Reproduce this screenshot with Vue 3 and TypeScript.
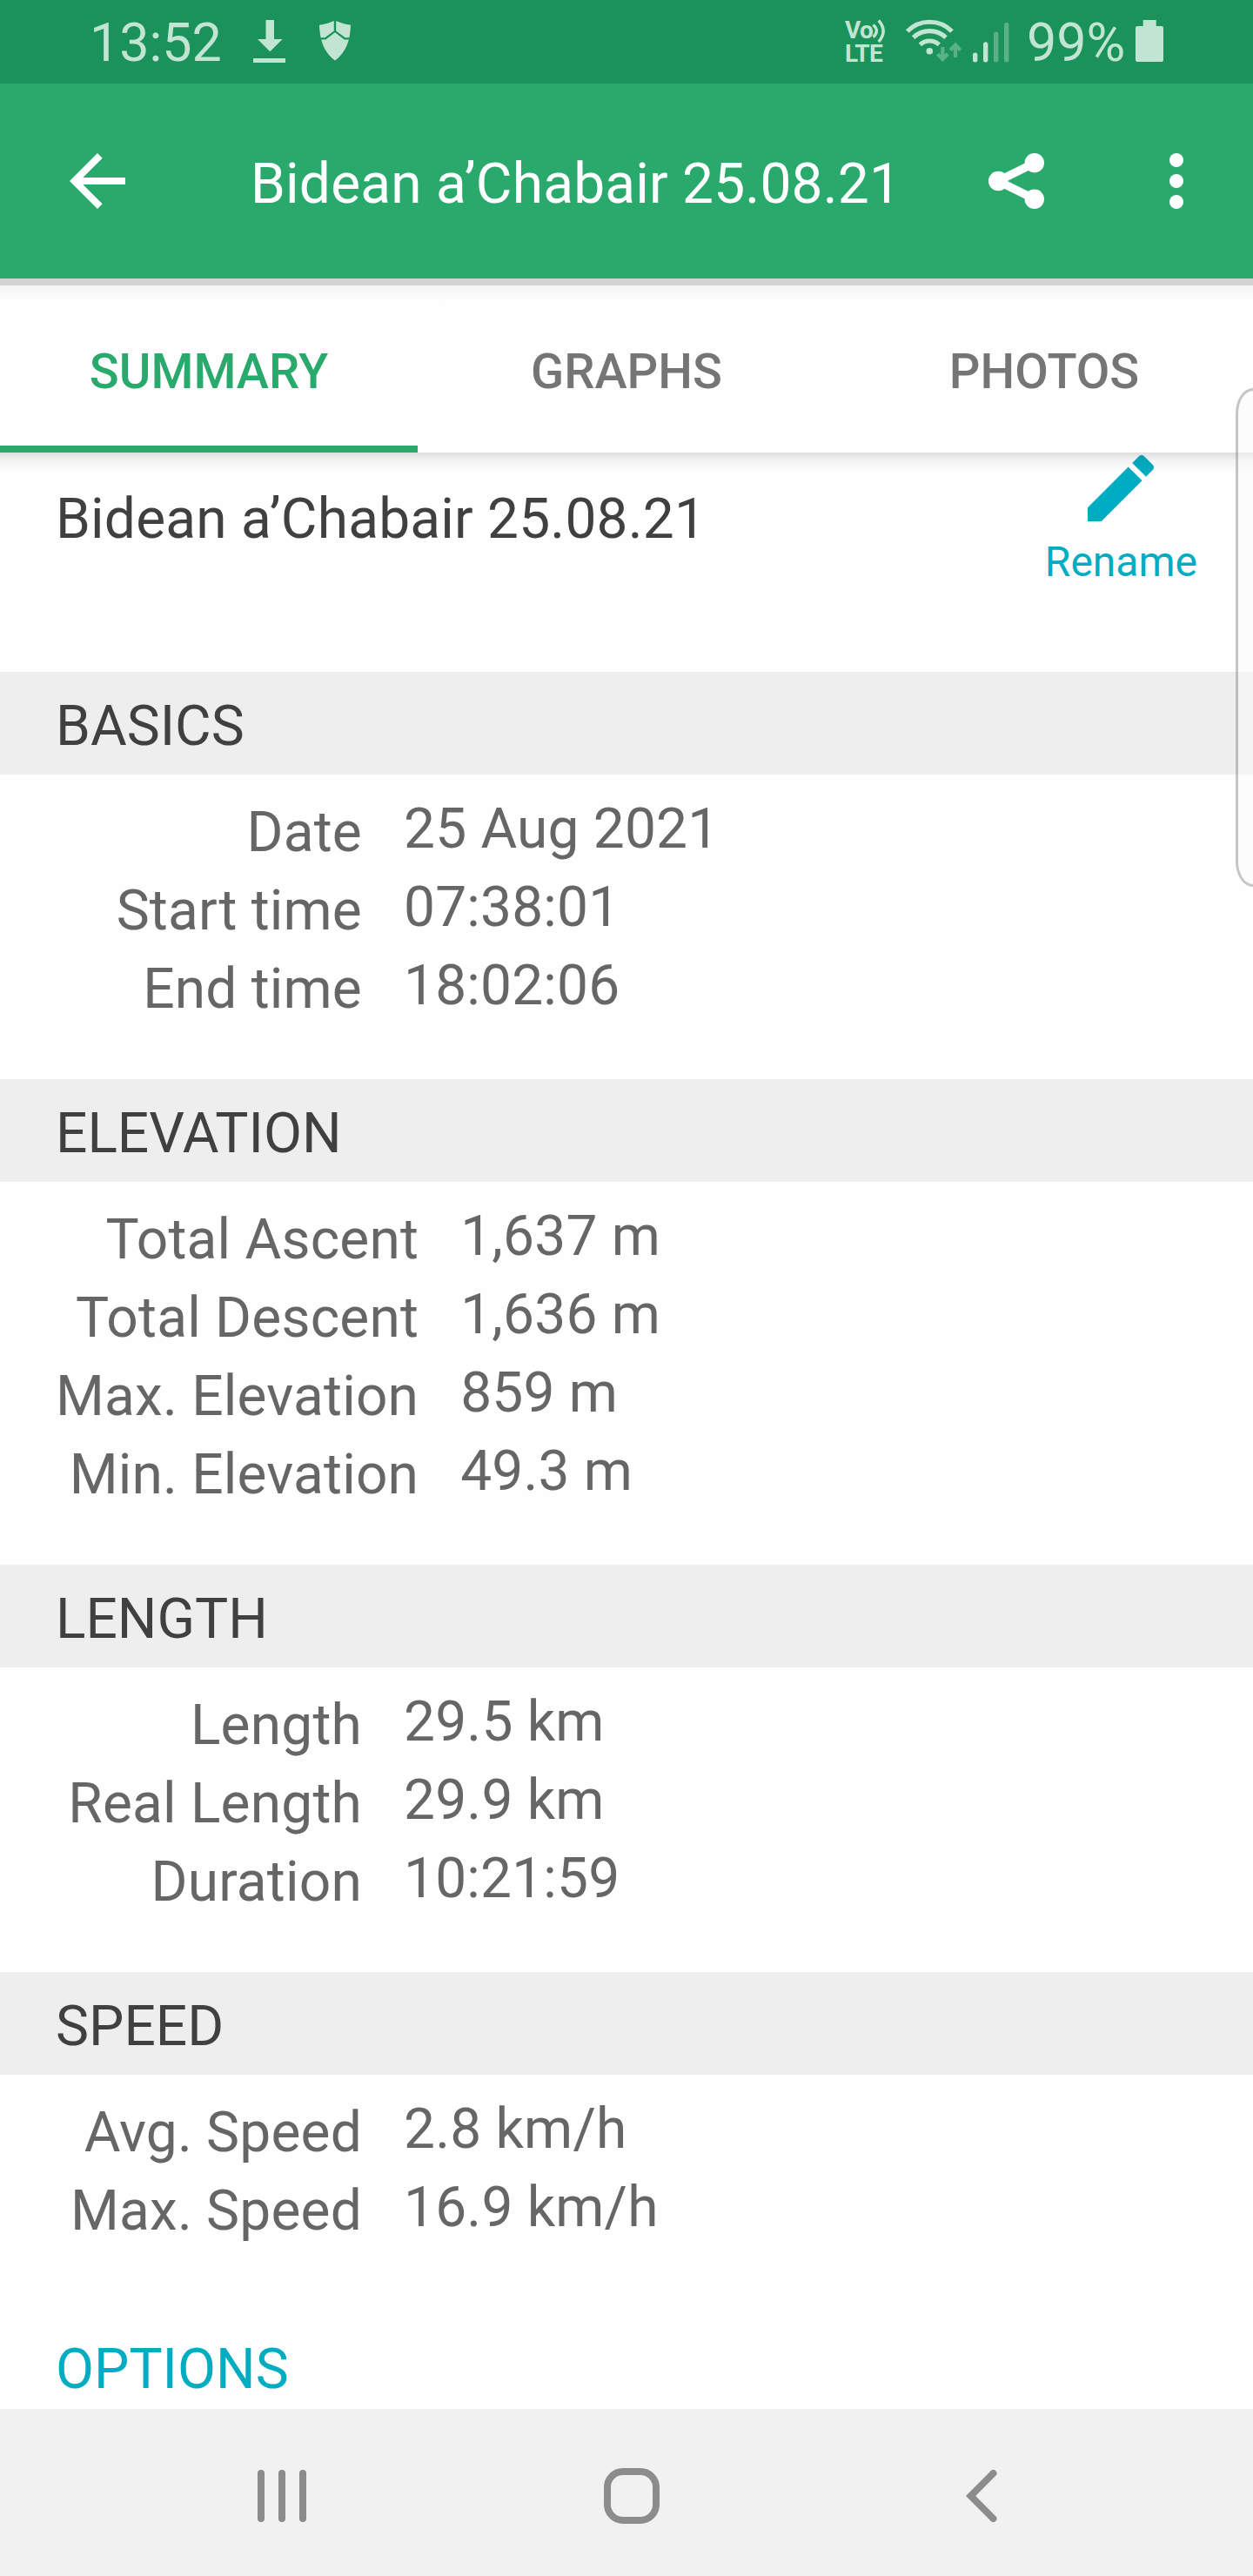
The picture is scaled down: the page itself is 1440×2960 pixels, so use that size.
<script setup lang="ts">
interface Row {
  label: string
  value: string
}
interface Section {
  title: string
  rows: Row[]
}

const trackName = 'Bidean a’Chabair 25.08.21'
const tabs: string[] = ['SUMMARY', 'GRAPHS', 'PHOTOS']
const activeTab = 'SUMMARY'

const sections: Section[] = [
  {
    title: 'BASICS',
    rows: [
      { label: 'Date', value: '25 Aug 2021' },
      { label: 'Start time', value: '07:38:01' },
      { label: 'End time', value: '18:02:06' },
    ],
  },
  {
    title: 'ELEVATION',
    rows: [
      { label: 'Total Ascent', value: '1,637 m' },
      { label: 'Total Descent', value: '1,636 m' },
      { label: 'Max. Elevation', value: '859 m' },
      { label: 'Min. Elevation', value: '49.3 m' },
    ],
  },
  {
    title: 'LENGTH',
    rows: [
      { label: 'Length', value: '29.5 km' },
      { label: 'Real Length', value: '29.9 km' },
      { label: 'Duration', value: '10:21:59' },
    ],
  },
  {
    title: 'SPEED',
    rows: [
      { label: 'Avg. Speed', value: '2.8 km/h' },
      { label: 'Max. Speed', value: '16.9 km/h' },
    ],
  },
]
</script>

<template>
  <div class="screen">
    <div class="status">
      <span class="clock">13:52</span>
      <svg class="download" width="38" height="50" viewBox="0 0 38 50" fill="currentColor">
        <path d="M14.5 0h9.5v22h9.7L19.3 36.3 5 22h9.5zM0 44h37v5H0z" />
      </svg>
      <svg class="shield" width="36" height="46" viewBox="0 0 36 46" fill="currentColor">
        <path d="M16.8 0v11.4L6.3 19.3H1.6C.7 14.6.1 9.6 0 4.8 6 3.8 11.6 2.3 16.8 0z" />
        <path d="M19.2 0v11.4L29.7 19.3h4.7C35.3 14.6 35.9 9.6 36 4.8 30 3.8 24.4 2.3 19.2 0z" />
        <path d="M18 13.3 28.7 21.5h5.1C31.2 31.5 26 39.5 18 45.6 10 39.5 4.8 31.5 2.2 21.5h5.100z" />
      </svg>
      <div class="volte">
        Vo<br />LTE
        <svg width="18" height="28" viewBox="0 0 18 28" fill="none" stroke="currentColor" stroke-width="3.4">
          <path d="M2.5 6.500C7.700 11 7.700 16.200 2.500 20.800" />
          <path d="M8.700 1.500C15.800 9.500 15.800 18 8.700 26" />
        </svg>
      </div>
      <svg class="wifi" width="66" height="50" viewBox="1040 22 66 50" fill="none" stroke="currentColor">
        <g stroke-width="5.2">
          <path d="M1042.700 36A36 36 0 0 1 1094 36" />
          <path d="M1049.600 43.200A27 27 0 0 1 1087 43.200" />
          <path d="M1057.400 51.300A16 16 0 0 1 1079.200 51.300" />
        </g>
        <circle cx="1068.3" cy="58.7" r="3.8" fill="currentColor" stroke="none" />
        <g stroke-width="4.2" opacity=".38">
          <path d="M1083.300 54v14M1077.500 62l5.800 6.200 5.800-6.200" />
          <path d="M1098 66V52M1092.200 57.800l5.800-6.200 5.800 6.200" />
        </g>
      </svg>
      <svg class="signal" width="42" height="46" viewBox="0 0 42 46" fill="currentColor">
        <rect x="0" y="34.5" width="5.4" height="11" rx="2.5" />
        <rect x="12" y="22.3" width="5.4" height="23.2" rx="2.5" />
        <g opacity=".38">
          <rect x="24" y="10.5" width="5.4" height="35" rx="2.5" />
          <rect x="36" y="0" width="5.4" height="45.5" rx="2.5" />
        </g>
      </svg>
      <span class="percent">99%</span>
      <svg class="battery" width="32" height="48" viewBox="0 0 32 48" fill="currentColor">
        <path d="M8.700 0h15v7H30a2 2 0 0 1 2 2v37a2 2 0 0 1-2 2H2a2 2 0 0 1-2-2V9a2 2 0 0 1 2-2h6.700z" />
      </svg>
    </div>

    <header class="appbar">
      <svg width="96" height="96" viewBox="0 0 24 24" fill="#fff">
        <path d="M20 11H7.830l5.590-5.590L12 4l-8 8 8 8 1.410-1.410L7.830 13H20v-2z" />
      </svg>
      <h1>{{ trackName }}</h1>
      <svg class="share" width="64" height="64" viewBox="0 0 64 64" fill="#fff">
        <path d="M53 11.300 11 32l42 20.700" fill="none" stroke="#fff" stroke-width="9.4" />
        <circle cx="52.8" cy="11.2" r="11.2" />
        <circle cx="11.2" cy="32" r="11.2" />
        <circle cx="52.8" cy="52.8" r="11.2" />
      </svg>
      <svg class="more" width="16" height="64" viewBox="0 0 16 64" fill="#fff">
        <circle cx="8" cy="8" r="8" />
        <circle cx="8" cy="32" r="8" />
        <circle cx="8" cy="56" r="8" />
      </svg>
    </header>
    <div class="strip"></div>

    <nav class="tabs">
      <div v-for="tab in tabs" :key="tab" class="tab" :class="{ active: tab === activeTab }">{{ tab }}</div>
    </nav>

    <main class="content">
      <div class="heading">
        <div class="name">{{ trackName }}</div>
        <div class="rename">
          <svg width="76" height="76" viewBox="3 3 18 18" fill="#00acc1">
            <path d="M3 17.250V21h3.750L17.810 9.940l-3.750-3.750L3 17.250zM20.710 7.040a1 1 0 0 0 0-1.410l-2.340-2.340a1 1 0 0 0-1.410 0l-1.830 1.830 3.750 3.750 1.830-1.830z" />
          </svg>
          <span>Rename</span>
        </div>
      </div>

      <section v-for="section in sections" :key="section.title">
        <h2>{{ section.title }}</h2>
        <div class="table">
          <div class="labels">
            <div v-for="row in section.rows" :key="row.label">{{ row.label }}</div>
          </div>
          <div class="values">
            <div v-for="row in section.rows" :key="row.label">{{ row.value }}</div>
          </div>
        </div>
      </section>

      <div class="options">OPTIONS</div>
    </main>

    <footer class="navbar">
      <svg width="56" height="60" viewBox="0 0 56 60" fill="#8c8c8c">
        <rect x="0" y="0" width="8" height="60" rx="4" />
        <rect x="24" y="0" width="8" height="60" rx="4" />
        <rect x="48" y="0" width="8" height="60" rx="4" />
      </svg>
      <svg width="64" height="64" viewBox="0 0 64 64" fill="none" stroke="#8c8c8c" stroke-width="8">
        <rect x="4" y="4" width="56" height="56" rx="18" />
      </svg>
      <svg width="36" height="60" viewBox="0 0 36 60" fill="none" stroke="#8c8c8c" stroke-width="8" stroke-linecap="round">
        <path d="M31.500 4 5.600 30l25.900 26" />
      </svg>
    </footer>

    <div class="edge-handle"></div>
  </div>
</template>

<style>
body {
  margin: 0;
}
</style>

<style scoped>
.screen {
  position: relative;
  display: flex;
  flex-direction: column;
  width: 1440px;
  height: 2960px;
  overflow: hidden;
  background: #fefefe;
  font-family: Roboto, "Liberation Sans", sans-serif;
  font-size: 64px;
}
svg {
  display: block;
  flex: none;
}
.status {
  display: flex;
  align-items: flex-start;
  height: 96px;
  background: #1a9259;
  color: #c2e4d3;
}
.clock,
.percent {
  font-size: 61px;
  line-height: 72px;
  margin-top: 13px;
  white-space: nowrap;
}
.clock {
  width: 188px;
  padding-left: 103px;
}
.download {
  margin-top: 23px;
}
.shield {
  margin: 24px 0 0 38px;
}
.volte {
  position: relative;
  width: 50px;
  height: 54px;
  margin: 21px 0 0 568px;
  font-size: 28px;
  font-weight: 700;
  line-height: 27px;
  letter-spacing: -0.7px;
  white-space: nowrap;
}
.volte svg {
  position: absolute;
  top: 1px;
  left: 30px;
}
.wifi {
  margin: 22px 0 0 19px;
}
.signal {
  margin: 25.5px 0 0 12px;
}
.percent {
  width: 125px;
  margin-left: 20px;
}
.battery {
  margin-top: 23px;
}
.appbar {
  display: flex;
  align-items: center;
  height: 224px;
  padding-left: 64px;
  background: #29aa6c;
}
h1 {
  width: 848px;
  margin: 0 0 0 128px;
  padding-top: 8px;
  font-size: 64px;
  font-weight: 400;
  line-height: 76px;
  letter-spacing: 0.2px;
  color: #fff;
  white-space: nowrap;
}
.more {
  margin-left: 144px;
}
.strip {
  height: 8px;
  background: #d3d3d3;
}
.tabs {
  position: relative;
  z-index: 1;
  display: flex;
  height: 192px;
  background: linear-gradient(#f4f4f4, #fefefe 18px);
}
.tabs::after {
  content: "";
  position: absolute;
  top: 192px;
  left: 0;
  right: 0;
  height: 24px;
  background: linear-gradient(rgba(0, 0, 0, 0.13), rgba(0, 0, 0, 0.04) 40%, rgba(0, 0, 0, 0));
}
.tab {
  box-sizing: border-box;
  flex: 1;
  padding-top: 6px;
  border-bottom: 8px solid transparent;
  font-size: 56px;
  font-weight: 500;
  line-height: 186px;
  text-align: center;
  color: #757575;
}
.tab.active {
  border-color: #29aa6c;
  color: #29aa6c;
}
.content {
  flex: 1;
}
.heading {
  display: flex;
  justify-content: space-between;
  height: 252px;
  padding: 0 64px;
}
.name {
  padding-top: 32px;
  line-height: 90px;
  letter-spacing: 0.2px;
  color: #404040;
}
.rename {
  display: flex;
  flex-direction: column;
  align-items: center;
  padding-top: 3px;
  font-size: 48px;
  line-height: 56px;
  color: #00acc1;
}
.rename span {
  margin-top: 19px;
}
h2 {
  box-sizing: border-box;
  height: 118px;
  margin: 0;
  padding: 7px 64px 0;
  background: #eee;
  font-size: 64px;
  font-weight: 400;
  line-height: 112px;
  color: #404040;
}
.table {
  display: flex;
  gap: 48px;
  padding: 22px 64px 58px;
  line-height: 90px;
  letter-spacing: 0.2px;
  color: #666;
}
.labels {
  min-width: 352px;
  text-align: right;
}
.values {
  margin: -4px 0 4px;
}
.options {
  padding: 34px 64px 0;
  line-height: 90px;
  color: #00acc1;
}
.navbar {
  display: flex;
  align-items: center;
  flex: none;
  height: 184px;
  padding: 8px 0 0 296px;
  background: #f1f1f1;
}
.navbar svg + svg {
  margin-left: 342px;
}
.navbar svg:last-child {
  margin-left: 352px;
}
.edge-handle {
  position: absolute;
  z-index: 2;
  top: 446px;
  right: 0;
  box-sizing: border-box;
  width: 20px;
  height: 573px;
  border: 3px solid rgba(130, 130, 130, 0.45);
  border-right: 0;
  border-radius: 20px 0 0 20px / 29px 0 0 29px;
  background: rgba(250, 250, 250, 0.5);
  background-clip: padding-box;
}
</style>
